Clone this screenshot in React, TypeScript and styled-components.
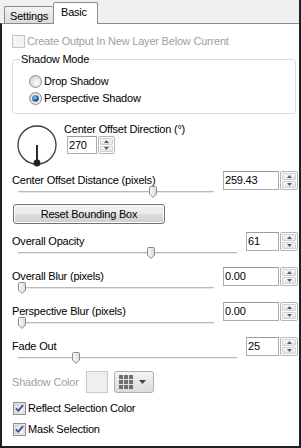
import React from "react";
import styled, { createGlobalStyle } from "styled-components";

const Global = createGlobalStyle`
  html, body { margin: 0; padding: 0; background: #fff; }
  * { box-sizing: border-box; }
`;

const Window = styled.div`
  width: 301px;
  height: 448px;
  background: #f0f0f0;
  border-right: 2px solid #1f1f1f;
  display: flex;
  flex-direction: column;
  font-family: "Liberation Sans", Arial, sans-serif;
  font-size: 11px;
  letter-spacing: -0.2px;
  color: #000;
`;

const TabStrip = styled.div`
  flex: none;
  height: 23px;
  display: flex;
  align-items: flex-end;
  padding-left: 4px;
`;

const Tab = styled.div<{ $active?: boolean }>`
  position: relative;
  z-index: ${(p) => (p.$active ? 1 : 0)};
  height: ${(p) => (p.$active ? 22 : 17)}px;
  margin-bottom: ${(p) => (p.$active ? -1 : 0)}px;
  padding: 3px ${(p) => (p.$active ? 7 : 5)}px 0;
  line-height: 13px;
  border: 1px solid #898c95;
  border-bottom: none;
  border-right: ${(p) => (p.$active ? "1px solid #898c95" : "none")};
  border-radius: 2px 2px 0 0;
  width: ${(p) => (p.$active ? 45 : 49)}px;
  background: ${(p) =>
    p.$active ? "#fff" : "linear-gradient(#f2f2f2, #e6e6e6 55%, #dcdcdc)"};
  white-space: nowrap;
`;

const Panel = styled.div`
  flex: 1;
  background: #fff;
  border-top: 1px solid #898c95;
  border-left: 2px solid #1f1f1f;
  border-bottom: 2px solid #1f1f1f;
  padding: 0 1px 0 10px;
  display: flex;
  flex-direction: column;
`;

const CheckRow = styled.div<{ $mt: number; $indent?: number; $disabled?: boolean }>`
  display: flex;
  align-items: center;
  gap: 2px;
  height: 13px;
  margin-top: ${(p) => p.$mt}px;
  margin-left: ${(p) => p.$indent ?? 0}px;
  color: ${(p) => (p.$disabled ? "#a0a0a0" : "#000")};
  white-space: nowrap;
  line-height: 13px;
`;

const Group = styled.fieldset`
  margin: 5px 2px 0 0;
  padding: 9px 0 8px 16px;
  border: 1px solid #d5dfe5;
  border-radius: 3px;
  display: flex;
  flex-direction: column;
  gap: 4px;
`;

const GroupLegend = styled.legend`
  margin-left: -9px;
  padding: 0 1px;
  line-height: 13px;
`;

const RadioRow = styled.div`
  display: flex;
  align-items: center;
  gap: 2px;
  height: 13px;
  line-height: 13px;
  white-space: nowrap;
`;

const DialRow = styled.div`
  display: flex;
  margin-top: 8px;
  height: 46px;
`;

const DialCol = styled.div`
  display: flex;
  flex-direction: column;
  margin-left: 4px;
`;

const PlainLabel = styled.div<{ $disabled?: boolean }>`
  line-height: 14px;
  height: 14px;
  white-space: nowrap;
  color: ${(p) => (p.$disabled ? "#a0a0a0" : "#000")};
`;

const Indent = styled.div`
  margin-left: 3px;
`;

const SliderRow = styled.div<{ $mt: number }>`
  display: grid;
  grid-template-columns: 1fr auto;
  column-gap: 9px;
  align-items: start;
  margin-top: ${(p) => p.$mt}px;
`;

const SliderCol = styled.div`
  padding-top: 2px;
  display: flex;
  flex-direction: column;
  min-width: 0;
`;

const SliderArea = styled.div`
  position: relative;
  height: 12px;
  margin-left: 6px;
`;

const Groove = styled.div`
  margin-top: 4px;
  height: 2px;
  border-top: 1px solid #b9b9b9;
  border-bottom: 1px solid #e9e9e9;
`;

const ThumbSvg = styled.svg<{ $left: number }>`
  position: absolute;
  top: -1px;
  left: ${(p) => p.$left}px;
`;

const SpinWrap = styled.div<{ $h: number }>`
  display: flex;
  gap: 1px;
  height: ${(p) => p.$h}px;
`;

const SpinField = styled.div<{ $w: number; $h: number }>`
  width: ${(p) => p.$w}px;
  height: ${(p) => p.$h}px;
  border: 1px solid #abadb3;
  border-top-color: #9a9ca2;
  background: #fff;
  padding-left: 1px;
  line-height: ${(p) => p.$h - 2}px;
  white-space: nowrap;
`;

const SpinButtons = styled.div<{ $w: number }>`
  width: ${(p) => p.$w}px;
  display: flex;
  flex-direction: column;
  border: 1px solid #b5b5b5;
  border-radius: 2px;
  background: #fff;
  padding: 1px;
  gap: 1px;
`;

const SpinBtn = styled.div`
  flex: 1;
  display: flex;
  align-items: center;
  justify-content: center;
  border-radius: 1px;
  background: linear-gradient(#f7f7f7, #e4e4e4);
  border: 1px solid #d0d0d0;
`;

const ResetButton = styled.div`
  margin-top: 5px;
  margin-left: 1px;
  width: 152px;
  height: 20px;
  border: 1px solid #707070;
  border-radius: 3px;
  background: linear-gradient(#f2f2f2 0%, #ebebeb 50%, #dddddd 51%, #cfcfcf 100%);
  box-shadow: inset 0 0 0 1px #fcfcfc;
  display: flex;
  align-items: center;
  justify-content: center;
  line-height: 13px;
`;

const ColorRow = styled.div`
  display: flex;
  align-items: center;
  margin-top: 6px;
  height: 22px;
`;

const ColorLabel = styled.div`
  width: 74px;
  color: #a0a0a0;
  white-space: nowrap;
  line-height: 13px;
`;

const Swatch = styled.div`
  width: 22px;
  height: 22px;
  border: 1px solid #c9c9c9;
  background: #efefef;
  margin-right: 6px;
`;

const ColorButton = styled.div`
  width: 40px;
  height: 22px;
  border: 1px solid #b0b0b0;
  border-radius: 3px;
  background: linear-gradient(#f4f4f4, #e6e6e6 50%, #dcdcdc);
  display: flex;
  align-items: center;
  padding-left: 4px;
  gap: 6px;
`;

const Check = ({ checked, disabled }: { checked?: boolean; disabled?: boolean }) => (
  <svg width="13" height="13" viewBox="0 0 13 13">
    <defs>
      <linearGradient id="cbg" x1="0" y1="0" x2="1" y2="1">
        <stop offset="0" stopColor="#dcdcdc" />
        <stop offset="1" stopColor="#fbfbfb" />
      </linearGradient>
    </defs>
    <rect
      x="0.5"
      y="0.5"
      width="12"
      height="12"
      fill={disabled ? "#f4f4f4" : "#f4f4f4"}
      stroke={disabled ? "#c4c4c4" : "#8e8f8f"}
    />
    {!disabled && <rect x="2" y="2" width="9" height="9" fill="url(#cbg)" stroke="#b8bcc2" strokeWidth="0.6" />}
    {checked && (
      <path d="M3 6.3 L5.3 8.8 L10 3.2" fill="none" stroke="#3d5596" strokeWidth="1.9" strokeLinejoin="round" />
    )}
  </svg>
);

const Radio = ({ checked }: { checked?: boolean }) => (
  <svg width="13" height="13" viewBox="0 0 13 13">
    <defs>
      <radialGradient id="rbg" cx="60%" cy="60%" r="60%">
        <stop offset="0" stopColor="#ffffff" />
        <stop offset="1" stopColor="#d4d4d4" />
      </radialGradient>
      <radialGradient id="rdot" cx="40%" cy="35%" r="70%">
        <stop offset="0" stopColor="#a6cdee" />
        <stop offset="0.55" stopColor="#2d6fa5" />
        <stop offset="1" stopColor="#163f66" />
      </radialGradient>
    </defs>
    <circle cx="6.5" cy="6.5" r="6" fill="url(#rbg)" stroke="#8e8f8f" />
    {checked && <circle cx="6.5" cy="6.5" r="3.3" fill="url(#rdot)" />}
  </svg>
);

const Arrow = ({ up }: { up?: boolean }) => (
  <svg width="5" height="3" viewBox="0 0 5 3">
    <polygon points={up ? "0,3 2.5,0 5,3" : "0,0 5,0 2.5,3"} fill="#4c5d7c" />
  </svg>
);

const Spin = ({ value, w, h = 19, bw = 18 }: { value: string; w: number; h?: number; bw?: number }) => (
  <SpinWrap $h={h}>
    <SpinField $w={w} $h={h}>{value}</SpinField>
    <SpinButtons $w={bw}>
      <SpinBtn>
        <Arrow up />
      </SpinBtn>
      <SpinBtn>
        <Arrow />
      </SpinBtn>
    </SpinButtons>
  </SpinWrap>
);

const Thumb = ({ left }: { left: number }) => (
  <ThumbSvg $left={left} width="8" height="12" viewBox="0 0 8 12">
    <defs>
      <linearGradient id="thg" x1="0" y1="0" x2="1" y2="0">
        <stop offset="0" stopColor="#fbfbfb" />
        <stop offset="1" stopColor="#d9d9d9" />
      </linearGradient>
    </defs>
    <path d="M0.5 1.5 Q0.5 0.5 1.5 0.5 H6.5 Q7.5 0.5 7.5 1.5 V8 L4 11.5 L0.5 8 Z" fill="url(#thg)" stroke="#8a8a8a" />
  </ThumbSvg>
);

const SliderField = ({
  label,
  value,
  wide,
  thumb,
  mt,
}: {
  label: string;
  value: string;
  wide?: boolean;
  thumb: number;
  mt: number;
}) => (
  <SliderRow $mt={mt}>
    <SliderCol>
      <PlainLabel>{label}</PlainLabel>
      <SliderArea>
        <Groove />
        <Thumb left={thumb} />
      </SliderArea>
    </SliderCol>
    <Spin value={value} w={wide ? 56 : 33} />
  </SliderRow>
);

const Dial = () => (
  <svg width="48" height="46" viewBox="0 0 48 46">
    <circle cx="25" cy="23" r="19" fill="none" stroke="#3a3a3a" strokeWidth="1.3" />
    <line x1="25" y1="23" x2="25" y2="41" stroke="#2a2a2a" strokeWidth="2" />
    <circle cx="25" cy="41" r="3.4" fill="#222" />
  </svg>
);

const GridIcon = () => (
  <svg width="14" height="14" viewBox="0 0 14 14">
    {[0, 5, 10].map((y) =>
      [0, 5, 10].map((x) => <rect key={`${x}-${y}`} x={x} y={y} width="4" height="4" fill="#6e6e6e" />)
    )}
  </svg>
);

const DropArrow = () => (
  <svg width="7" height="4" viewBox="0 0 7 4">
    <polygon points="0,0 7,0 3.5,4" fill="#444" />
  </svg>
);

export default function App() {
  return (
    <>
      <Global />
      <Window>
        <TabStrip>
          <Tab>Settings</Tab>
          <Tab $active>Basic</Tab>
        </TabStrip>
        <Panel>
          <CheckRow $mt={11} $disabled>
            <Check disabled />
            <span>Create Output In New Layer Below Current</span>
          </CheckRow>
          <Group>
            <GroupLegend>Shadow Mode</GroupLegend>
            <RadioRow>
              <Radio />
              <span>Drop Shadow</span>
            </RadioRow>
            <RadioRow>
              <Radio checked />
              <span>Perspective Shadow</span>
            </RadioRow>
          </Group>
          <DialRow>
            <Dial />
            <DialCol>
              <PlainLabel>Center Offset Direction (°)</PlainLabel>
              <Indent>
                <Spin value="270" w={30} h={18} bw={17} />
              </Indent>
            </DialCol>
          </DialRow>
          <SliderField mt={3} label="Center Offset Distance (pixels)" value="259.43" wide thumb={131} />
          <ResetButton>Reset Bounding Box</ResetButton>
          <SliderField mt={8} label="Overall Opacity" value="61" thumb={129} />
          <SliderField mt={7} label="Overall Blur (pixels)" value="0.00" wide thumb={0} />
          <SliderField mt={7} label="Perspective Blur (pixels)" value="0.00" wide thumb={0} />
          <SliderField mt={7} label="Fade Out" value="25" thumb={54} />
          <ColorRow>
            <ColorLabel>Shadow Color</ColorLabel>
            <Swatch />
            <ColorButton>
              <GridIcon />
              <DropArrow />
            </ColorButton>
          </ColorRow>
          <CheckRow $mt={9} $indent={1}>
            <Check checked />
            <span>Reflect Selection Color</span>
          </CheckRow>
          <CheckRow $mt={8} $indent={1}>
            <Check checked />
            <span>Mask Selection</span>
          </CheckRow>
        </Panel>
      </Window>
    </>
  );
}
